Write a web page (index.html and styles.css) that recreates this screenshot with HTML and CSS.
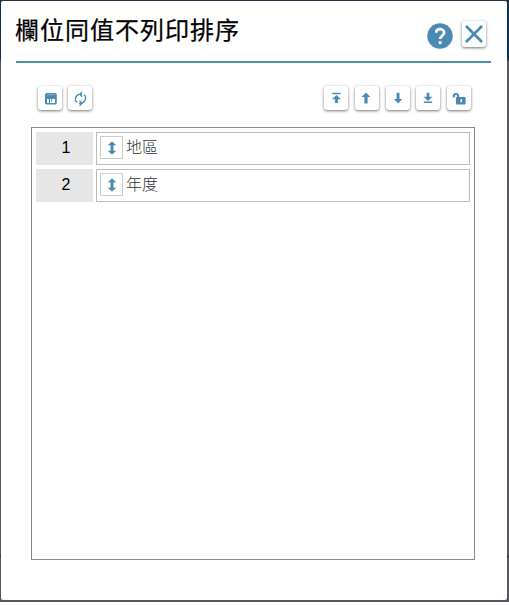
FILE: index.html
```html
<!DOCTYPE html>
<html lang="zh-Hant">
<head>
<meta charset="utf-8">
<title>欄位同值不列印排序</title>
<link rel="stylesheet" href="styles.css">
</head>
<body>
<div class="backdrop">
<main class="dialog">
  <header class="header">
    <h1 class="title">欄位同值不列印排序</h1>
    <div class="actions">
      <svg class="help" viewBox="0 0 26 26"><circle cx="13" cy="13" r="12.7" fill="#4a8ab3"/><path d="M9.2 9.8c0-5 7.9-4.8 7.9-.3 0 3.1-3.9 3.3-3.9 6.5" fill="none" stroke="#fff" stroke-width="2.7"/><path d="M11.7 18.2h2.9v2.9h-2.9z" fill="#fff"/></svg>
      <button class="button close" aria-label="關閉"><svg viewBox="0 0 24 24"><path d="M4 4l16 16M20 4L4 20" fill="none" stroke="#4a8ab3" stroke-width="2.7"/></svg></button>
    </div>
  </header>
  <div class="toolbar">
    <div class="group">
      <button class="button"><svg viewBox="0 0 24 24"><path d="M8.8 7h8.4q1.6 0 1.6 1.6v8.2q0 1.7-1.6 1.7H8.8q-1.8 0-1.8-1.8V8.6Q7 7 8.8 7z"/><path d="M9 8.4h8v.7H9z" fill="#9fc2d6"/><path d="M9 13h2v4H9zM12 13h5v4h-5z" fill="#fff"/><path d="M13 13h1v2.7h-1z"/></svg></button>
      <button class="button"><svg viewBox="0 0 24 24"><g fill="none" stroke="#4a8ab3" stroke-width="1.3"><path d="M14 8.4H11q-3.2 1.2-3.5 4v2.6l1.8 1.2M11 17.3h3q3.2-1.8 3.5-4.4v-2.3l-1.6-1.8M14.2 5.9l-2.4 2.4 2.4 2.4M11.5 14.8l2.6 2.5-2.6 2.5"/></g></svg></button>
    </div>
    <div class="group">
      <button class="button"><svg viewBox="0 0 24 24"><path d="M8.3 6.8h8.4v1.4H8.3zM12.5 9l4.5 4.2h-3.1V17h-2.8v-3.8H8z"/></svg></button>
      <button class="button"><svg viewBox="0 0 24 24"><path d="M11 6.5l4.4 4.6h-2.8V17.5H9.4v-6.4H6.6z"/></svg></button>
      <button class="button"><svg viewBox="0 0 24 24"><path d="M10.6 6.8h2.9V13h2.9l-4.3 4.5L7.8 13h2.8z"/></svg></button>
      <button class="button"><svg viewBox="0 0 24 24"><path d="M10.6 6.8h2.8v3.9h3L12 15l-4.4-4.3h3zM7.8 15.6h8.4V17H7.8z"/></svg></button>
      <button class="button"><svg viewBox="0 0 24 24"><path fill-rule="evenodd" d="M10 11h7.5q1.1 0 1.1 1v5.4q0 1.1-1.1 1.1H10q-1.1 0-1.1-1.1V12q0-1 1.1-1zM13.5 13.2v3h1.6v-3z"/><path d="M6.8 11.4V9.5q0-1.6 2-1.6h.2q2.1 0 2.1 2v1.6" fill="none" stroke="#4a8ab3" stroke-width="2"/></svg></button>
    </div>
  </div>
  <section class="list">
    <div class="row">
      <div class="number">1</div>
      <div class="field"><span class="handle"><svg viewBox="0 0 10 14"><path d="M5 .6l4.4 3.6H6.5v5.6h2.9L5 13.4.6 9.8h2.9V4.2H.6z"/></svg></span><span class="name">地區</span></div>
    </div>
    <div class="row">
      <div class="number">2</div>
      <div class="field"><span class="handle"><svg viewBox="0 0 10 14"><path d="M5 .6l4.4 3.6H6.5v5.6h2.9L5 13.4.6 9.8h2.9V4.2H.6z"/></svg></span><span class="name">年度</span></div>
    </div>
  </section>
</main>
</div>
</body>
</html>
```
FILE: styles.css
```css
* { box-sizing: border-box; }
body { margin: 0; background: #fff; overflow: hidden; font-family: "Liberation Sans", "Noto Sans CJK TC", sans-serif; }
.backdrop { width: 509px; height: 602px; padding: 1px 2px 2px 1px; background: linear-gradient(#233548 0, #12304f 10px, #12304f 60px, #58555f 61px, #58555f 555px, #35343f 556px, #35343f 557px, #58555f 558px); }
.dialog { width: 506px; height: 599px; padding: 0 15px; background: #fff; border-radius: 2px; display: flex; flex-direction: column; }
.header { height: 62px; border-bottom: 2px solid #4a8ab3; display: flex; justify-content: space-between; margin-right: 1px; flex: none; }
.title { margin: 11px 0 0 -1px; font: 400 24px/34px "Noto Sans CJK TC", sans-serif; letter-spacing: 1px; color: #000; -webkit-text-stroke: .25px #000; }
.actions { display: flex; gap: 9px; padding: 20px 5px 0 0; }
.help { width: 26px; height: 26px; margin-top: 2px; }
.button { display: block; width: 24px; height: 24px; padding: 0; border: 0; border-radius: 3px; background: #fff; box-shadow: 0 1px 3px rgba(0, 0, 0, .55); }
.button svg { display: block; width: 24px; height: 24px; fill: #4a8ab3; }
.close { width: 24px; height: 26px; }
.close svg { width: 24px; height: 24px; }
.toolbar { display: flex; justify-content: space-between; padding: 23px 22px 0 22px; margin-right: -1px; }
.group { display: flex; gap: 6.7px; }
.group:first-child { gap: 6px; }
.list { width: 444px; height: 433px; margin: 17px 0 0 15px; padding: 4px; border: 1px solid #888; display: flex; flex-direction: column; gap: 4px; }
.row { display: flex; gap: 3px; height: 33px; }
.number { width: 57px; background: #e6e6e6; color: #000; font-size: 16px; line-height: 32px; padding-left: 3px; text-align: center; }
.field { width: 374px; border: 1px solid #bbb; display: flex; padding: 3px; gap: 3px; }
.handle { width: 23px; height: 23px; border: 1px solid #ccc; display: flex; align-items: center; justify-content: center; }
.handle svg { width: 10px; height: 14px; fill: #4a8ab3; }
.name { font: 300 16px/21px "Noto Sans CJK TC", sans-serif; color: #333; }
```
